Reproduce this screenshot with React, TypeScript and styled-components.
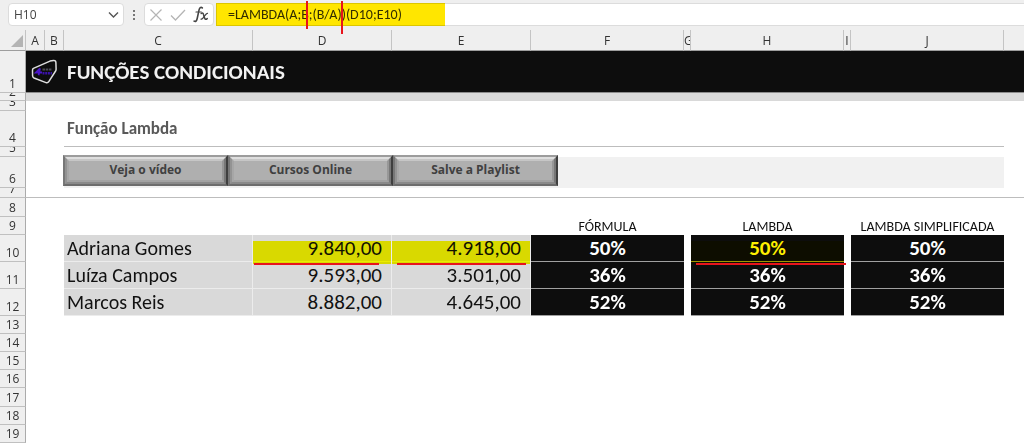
import React from "react";
import styled, { createGlobalStyle, css } from "styled-components";

const GlobalStyle = createGlobalStyle`
  *, *::before, *::after { box-sizing: border-box; }
  body { margin: 0; background: #fff; color: #111; font-family: Carlito, Lato, "Liberation Sans", sans-serif; }
`;

const uiFont = css`font-family: "Open Sans", "Noto Sans", sans-serif;`;

const Workbook = styled.main`
  width: 100%;
  overflow: hidden;
`;

const FormulaBar = styled.header`
  display: flex;
  align-items: center;
  height: 30px;
  padding: 3px 0 4px 8px;
  background: #efefef;
`;

const NameBox = styled.div`
  display: flex;
  align-items: center;
  width: 116px;
  height: 23px;
  padding: 0 4px 0 5px;
  background: #fff;
  border: 1px solid #dcdcdc;
  border-radius: 4px;
`;

const NameInput = styled.input`
  ${uiFont}
  flex: 1;
  min-width: 0;
  padding: 0;
  border: 0;
  background: none;
  color: #444;
  font-size: 12px;
`;

const IconButton = styled.button`
  display: flex;
  padding: 0;
  border: 0;
  background: none;
`;

const Grip = styled.svg`
  flex: none;
  margin: 0 8px;
`;

const FormulaTools = styled.div`
  display: flex;
  flex: none;
  align-items: center;
  gap: 6px;
  width: 70px;
  height: 23px;
  padding: 0 4px;
  background: #fff;
  border: 1px solid #dcdcdc;
  border-radius: 4px;
`;

const FormulaField = styled.div`
  position: relative;
  flex: 1;
  height: 23px;
  margin-left: 2px;
  background: #fff;
  border: 1px solid #dcdcdc;
  border-right: 0;
`;

const FormulaInput = styled.input`
  width: 100%;
  height: 21px;
  padding: 0 11px;
  border: 0;
  background: none;
  color: #333;
  font-family: Carlito, Lato, sans-serif;
  font-size: 14px;
`;

const Marker = styled.span<{ $ink?: string }>`
  position: absolute;
  background: ${(p) => p.$ink ?? "#ffff00"};
  mix-blend-mode: multiply;
  pointer-events: none;
`;

const FormulaMarker = styled(Marker)`
  top: -1px;
  left: -1px;
  width: 229px;
  height: 23px;
`;

const CellMarker = styled(Marker)`
  top: 6px;
  left: 0;
  right: 0;
  height: 23px;
  z-index: 1;
`;

const PenStroke = styled.span`
  position: absolute;
  background: #e8141c;
  pointer-events: none;
  z-index: 2;
`;

const VerticalStroke = styled(PenStroke)<{ $left: number; $height: number }>`
  top: -3px;
  left: ${(p) => p.$left}px;
  width: 2px;
  height: ${(p) => p.$height}px;
`;

const Underline = styled(PenStroke)<{ $left: number; $right: number }>`
  top: 28px;
  left: ${(p) => p.$left}px;
  right: ${(p) => p.$right}px;
  height: 2px;
`;

const Sheet = styled.table`
  width: 100%;
  table-layout: fixed;
  border-collapse: separate;
  border-spacing: 0;
  td, th { padding: 0; }
`;

const Col = styled.col<{ $w?: number }>`
  width: ${(p) => (p.$w ? `${p.$w}px` : "auto")};
`;

const ColumnHead = styled.th`
  ${uiFont}
  height: 21px;
  overflow: hidden;
  background: #efefef;
  border-right: 1px solid #c4c4c4;
  border-bottom: 1px solid #9d9d9d;
  color: #333;
  font-size: 12px;
  font-weight: 400;
  line-height: 18px;
  &:last-child { border-right: 0; }
`;

const ColumnLabel = styled.div`
  display: flex;
  justify-content: safe center;
  height: 20px;
  padding-top: 2px;
  overflow: hidden;
`;

const RowHead = styled.th`
  ${uiFont}
  background: #efefef;
  border-right: 1px solid #ababab;
  border-bottom: 1px solid #c0c0c0;
  color: #333;
  font-size: 12px;
  font-weight: 400;
  vertical-align: bottom;
`;

const RowLabel = styled.div<{ $h: number }>`
  display: flex;
  align-items: flex-end;
  justify-content: center;
  height: ${(p) => p.$h - 1}px;
  overflow: hidden;
  line-height: 16px;
`;

const TitleCell = styled.td`
  background: #0d0d0d;
  border-bottom: 1px solid #8c8c8c;
`;

const TitleBar = styled.div`
  display: flex;
  align-items: center;
  gap: 9px;
  padding-left: 5px;
`;

const Title = styled.h1`
  margin: 0;
  color: #f2f2f2;
  font-size: 21px;
  font-weight: 700;
  line-height: 24px;
`;

const StripCell = styled.td`
  background: #d9d9d9;
`;

const SectionCell = styled.td`
  border-bottom: 1px solid #bdbdbd;
`;

const SectionTitle = styled.h2`
  margin: 0;
  padding-left: 3px;
  color: #595959;
  font-size: 17px;
  font-weight: 700;
  line-height: 20px;
`;

const BandCell = styled.td`
  position: relative;
  background: #f1f1f1;
`;

const ButtonBar = styled.div`
  position: absolute;
  top: -2px;
  left: -1px;
  display: flex;
`;

const BevelButton = styled.button`
  position: relative;
  width: 165px;
  height: 31px;
  padding: 0 0 3px;
  background: #afafaf;
  border: 2px solid;
  border-color: #9c9c9c #3f3f3f #6c6c6c #777;
  color: #404040;
  font-family: "Open Sans", sans-serif;
  font-size: 12px;
  font-weight: 700;
  &::before, &::after {
    content: "";
    position: absolute;
    border: 2px solid;
  }
  &::before {
    inset: 0;
    border-color: #dedede #777 #898989 #939393;
  }
  &::after {
    inset: 2px;
    border-color: #c6c6c6 #979797 #a2a2a2 #a6a6a6;
  }
`;

const RuledCell = styled.td`
  border-bottom: 1px solid #bdbdbd;
`;

const HeadCell = styled.th`
  font-size: 14px;
  font-weight: 400;
  line-height: 16px;
  vertical-align: bottom;
  white-space: nowrap;
`;

const NameCell = styled.td`
  background: #d9d9d9;
  border-right: 1px solid #ececec;
  border-bottom: 1px solid #ececec;
  padding-left: 3px !important;
  font-size: 20px;
  line-height: 26px;
`;

const NumberCell = styled(NameCell)`
  position: relative;
  padding-right: 9px !important;
  font-size: 21px;
  text-align: right;
`;

const ResultCell = styled.td`
  position: relative;
  background: #0d0d0d;
  border-bottom: 1px solid #a0a0a0;
  color: #fff;
  font-size: 21px;
  font-weight: 700;
  line-height: 25px;
  text-align: center;
`;

const columns: [string, number?][] = [
  ["A", 19], ["B", 19], ["C", 189], ["D", 139], ["E", 139], ["F", 153],
  ["G", 7], ["H", 153], ["I", 7], ["J", 153], [""],
];

const people = [
  { row: 10, h: 27, name: "Adriana Gomes", base: "9.840,00", part: "4.918,00", rate: "50%" },
  { row: 11, h: 27, name: "Luíza Campos", base: "9.593,00", part: "3.501,00", rate: "36%" },
  { row: 12, h: 26, name: "Marcos Reis", base: "8.882,00", part: "4.645,00", rate: "52%" },
];

const emptyRows: [number, number][] = [
  [13, 18], [14, 18], [15, 18], [16, 18], [17, 19], [18, 18], [19, 18],
];

function Row({ n, h, children }: { n: number; h: number; children?: React.ReactNode }) {
  return (
    <tr>
      <RowHead scope="row"><RowLabel $h={h}>{n}</RowLabel></RowHead>
      {children}
    </tr>
  );
}

function Logo() {
  return (
    <svg width="27" height="26" viewBox="0 0 27 26" aria-hidden="true">
      <path d="M2.4 9.400 Q1.400 10 1.500 11.500 L1.600 17 Q1.700 18.400 3 19 L15 23.600 Q16.800 24.200 17.800 22.700 L24.600 12 Q25.200 11 25.100 9.800 L24.900 3.500 Q24.700 1.300 22.500 1.600 L19 2.100 Z" fill="#0d0d0d" stroke="#dedede" strokeWidth="1.500" strokeLinejoin="round" />
      <path d="M9 9.300 L4.800 13.500 H11 M9 9.300 L7.600 16.200" fill="none" stroke="#4a16c8" strokeWidth="1.800" />
      <path d="M11.500 10.500 H20.500" stroke="#4b4b55" strokeWidth="2" strokeDasharray="2.500 0.700" />
      <path d="M11.500 14.300 H21" stroke="#3b12a8" strokeWidth="2.400" strokeDasharray="2 0.700" />
    </svg>
  );
}

export default function App() {
  return (
    <Workbook>
      <GlobalStyle />
      <FormulaBar>
        <NameBox>
          <NameInput aria-label="Caixa de nome" defaultValue="H10" />
          <IconButton aria-label="Abrir lista de nomes">
            <svg width="11" height="8" viewBox="0 0 11 8" fill="none" stroke="#555" strokeWidth="1.4">
              <path d="M1 1.500 L5.500 6 L10 1.500" />
            </svg>
          </IconButton>
        </NameBox>
        <Grip width="4" height="12" viewBox="0 0 4 12" fill="#777" aria-hidden="true">
          <rect x="1" y="1" width="2" height="2" />
          <rect x="1" y="5" width="2" height="2" />
          <rect x="1" y="9" width="2" height="2" />
        </Grip>
        <FormulaTools>
          <IconButton aria-label="Cancelar">
            <svg width="14" height="14" viewBox="0 0 14 14" fill="none" stroke="#b5b5b5" strokeWidth="1.2">
              <path d="M1.500 1.500 L12.500 12.500 M12.500 1.500 L1.500 12.500" />
            </svg>
          </IconButton>
          <IconButton aria-label="Inserir">
            <svg width="18" height="14" viewBox="0 0 18 14" fill="none" stroke="#b5b5b5" strokeWidth="1.3">
              <path d="M2 7.500 L6.500 12 L16 2" />
            </svg>
          </IconButton>
          <IconButton aria-label="Inserir função">
            <svg width="16" height="17" viewBox="0 0 16 17" fill="none" stroke="#444" strokeLinecap="round">
              <path d="M9.300 1.900 C7.800 0.600 6.500 1.900 6 4.200 L4.200 12.500 C3.700 15 2.600 16 1.100 15.100" strokeWidth="1.600" />
              <path d="M3 6 H8.300" strokeWidth="1.200" />
              <path d="M8.200 7.500 C9.500 6.500 10.200 7.200 10.600 8.700 L11.600 12 C12 13.400 12.900 13.800 14.200 12.600" strokeWidth="1.500" />
              <path d="M14.500 7.300 C12.500 6.800 10.300 13.700 8 13.200" strokeWidth="1.200" />
            </svg>
          </IconButton>
        </FormulaTools>
        <FormulaField>
          <FormulaInput aria-label="Barra de fórmulas" defaultValue="=LAMBDA(A;B;(B/A))(D10;E10)" />
          <FormulaMarker $ink="#ffe600" />
          <VerticalStroke $left={89} $height={28} />
          <VerticalStroke $left={124} $height={33} />
        </FormulaField>
      </FormulaBar>

      <Sheet>
        <colgroup>
          <Col $w={26} />
          {columns.map(([name, w]) => <Col key={name} $w={w} />)}
        </colgroup>
        <thead>
          <tr>
            <ColumnHead aria-label="Selecionar tudo">
              <ColumnLabel>
                <svg width="24" height="18" viewBox="0 0 24 18" aria-hidden="true">
                  <path d="M22 3 V15 H10 Z" fill="#b4b4b4" />
                </svg>
              </ColumnLabel>
            </ColumnHead>
            {columns.map(([name]) => (
              <ColumnHead key={name} scope="col"><ColumnLabel>{name}</ColumnLabel></ColumnHead>
            ))}
          </tr>
        </thead>
        <tbody>
          <Row n={1} h={42}>
            <TitleCell colSpan={11}>
              <TitleBar><Logo /><Title>FUNÇÕES CONDICIONAIS</Title></TitleBar>
            </TitleCell>
          </Row>
          <Row n={2} h={8}><StripCell colSpan={11} /></Row>
          <Row n={3} h={10}><td colSpan={11} /></Row>
          <Row n={4} h={36}>
            <td colSpan={2} />
            <SectionCell colSpan={8}><SectionTitle>Função Lambda</SectionTitle></SectionCell>
            <td />
          </Row>
          <Row n={5} h={10}><td colSpan={11} /></Row>
          <Row n={6} h={31}>
            <td colSpan={2} />
            <BandCell colSpan={8}>
              <ButtonBar>
                <BevelButton>Veja o vídeo</BevelButton>
                <BevelButton>Cursos Online</BevelButton>
                <BevelButton>Salve a Playlist</BevelButton>
              </ButtonBar>
            </BandCell>
            <td />
          </Row>
          <Row n={7} h={10}><RuledCell colSpan={11} /></Row>
          <Row n={8} h={19}><td colSpan={11} /></Row>
          <Row n={9} h={18}>
            <td colSpan={5} />
            <HeadCell>FÓRMULA</HeadCell>
            <td />
            <HeadCell>LAMBDA</HeadCell>
            <td />
            <HeadCell>LAMBDA SIMPLIFICADA</HeadCell>
            <td />
          </Row>
          {people.map((p) => {
            const marked = p.row === 10;
            return (
              <Row key={p.row} n={p.row} h={p.h}>
                <td colSpan={2} />
                <NameCell>{p.name}</NameCell>
                <NumberCell>
                  {p.base}
                  {marked && <><CellMarker /><Underline $left={1} $right={12} /></>}
                </NumberCell>
                <NumberCell>
                  {p.part}
                  {marked && <><CellMarker /><Underline $left={5} $right={4} /></>}
                </NumberCell>
                <ResultCell>{p.rate}</ResultCell>
                <td />
                <ResultCell>
                  {p.rate}
                  {marked && <><CellMarker $ink="#fff000" /><Underline $left={5} $right={-2} /></>}
                </ResultCell>
                <td />
                <ResultCell>{p.rate}</ResultCell>
                <td />
              </Row>
            );
          })}
          {emptyRows.map(([n, h]) => (
            <Row key={n} n={n} h={h}><td colSpan={11} /></Row>
          ))}
        </tbody>
      </Sheet>
    </Workbook>
  );
}
